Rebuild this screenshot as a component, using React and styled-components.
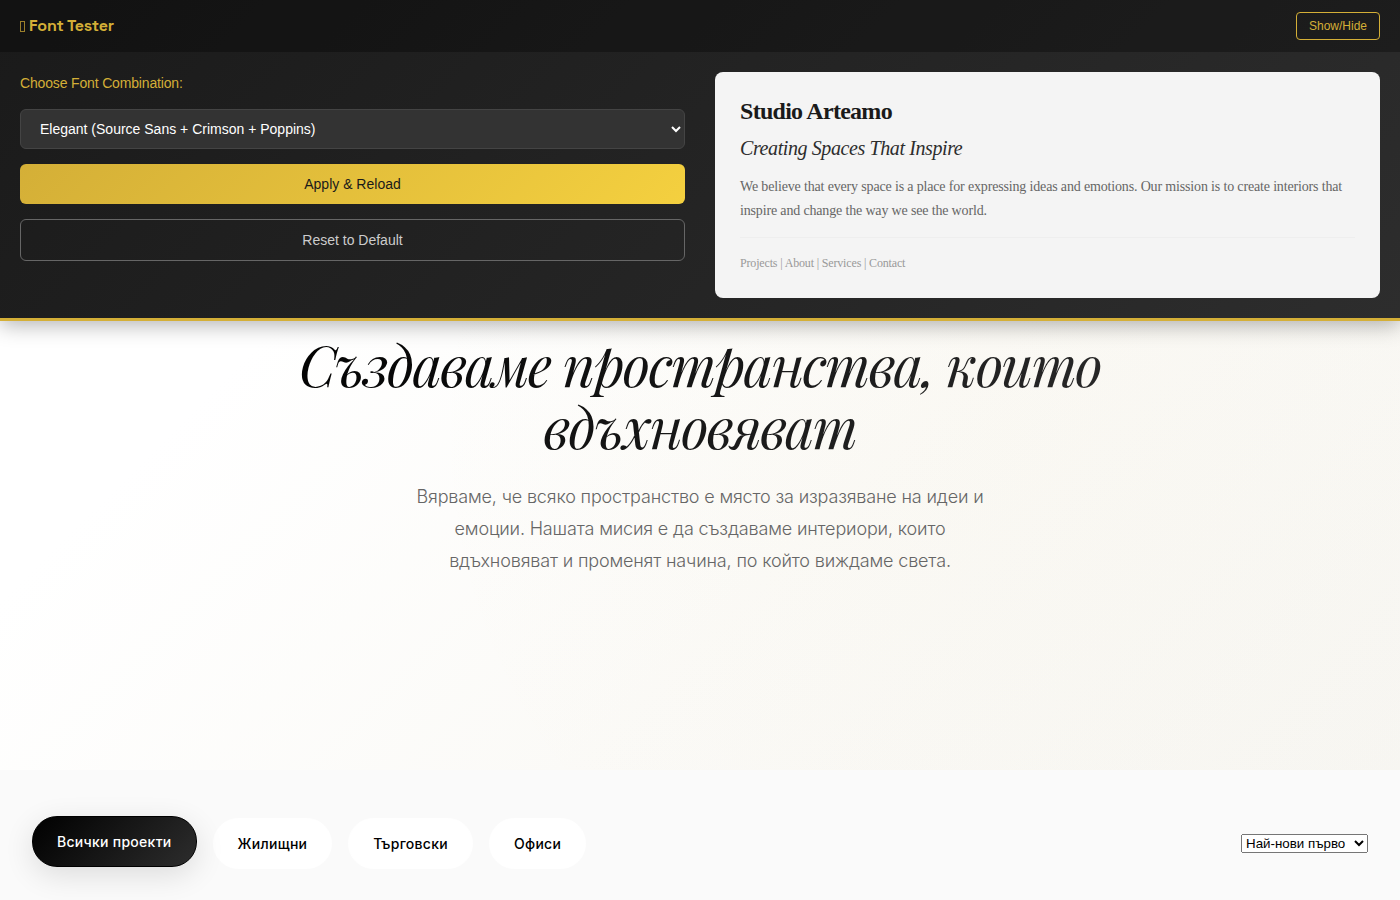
import React, { useState } from "react";
import styled, { createGlobalStyle, css } from "styled-components";

const GlobalStyle = createGlobalStyle`
  *, *::before, *::after { box-sizing: border-box; }
  body {
    margin: 0;
    background: #fafafa;
    color: #1a1a1a;
    font-family: Inter, "Liberation Sans", sans-serif;
    font-size: 16px;
    letter-spacing: -0.01em;
  }
  h1, h2, h3, p { margin: 0; }
`;

const sans = `"Liberation Sans", Arial, sans-serif`;
const serif = `"Liberation Serif", "Times New Roman", serif`;

const Panel = styled.aside`
  position: relative;
  z-index: 1;
  background: linear-gradient(135deg, #1a1a1a, #2d2d2d);
  border-bottom: 3px solid #d4af37;
  box-shadow: 0 4px 20px rgba(0, 0, 0, 0.3);
  font-family: ${sans};
`;

const PanelHeader = styled.header`
  display: flex;
  align-items: center;
  justify-content: space-between;
  padding: 12px 20px;
  background: rgba(0, 0, 0, 0.3);
`;

const PanelTitle = styled.h3`
  display: flex;
  align-items: center;
  gap: 4px;
  color: #d4af37;
  font: 600 16px/24px "Space Grotesk", Inter, sans-serif;
`;

const TitleMark = styled.span`
  width: 5px;
  height: 11px;
  border: 1px solid #9a7f2b;
`;

const ToggleButton = styled.button`
  height: 28px;
  padding: 0 12px;
  border: 1px solid #d4af37;
  border-radius: 4px;
  background: transparent;
  color: #d4af37;
  font: 12px ${sans};
  cursor: pointer;
`;

const PanelBody = styled.div`
  display: grid;
  grid-template-columns: 1fr 1fr;
  gap: 30px;
  padding: 20px;
`;

const Controls = styled.div`
  display: flex;
  flex-direction: column;
  gap: 15px;
`;

const Label = styled.label`
  color: #d4af37;
  font-size: 14px;
  line-height: 22px;
`;

const FontSelect = styled.select`
  height: 40px;
  padding: 0 15px;
  border: 1px solid #444;
  border-radius: 6px;
  background: #333;
  color: #fff;
  font: 14px ${sans};
`;

const ActionButton = styled.button`
  height: 40px;
  border: 0;
  border-radius: 6px;
  font: 14px ${sans};
  cursor: pointer;
  ${({ $outline }) =>
    $outline
      ? css`
          height: 42px;
          border: 1px solid #666;
          background: transparent;
          color: #ccc;
        `
      : css`
          background: linear-gradient(135deg, #d4af37, #f4d03f);
          color: #1a1a1a;
        `}
`;

const Preview = styled.section`
  padding: 25px;
  border-radius: 8px;
  background: #f4f4f4;
  font-family: ${serif};
`;

const PreviewTitle = styled.h2`
  margin-bottom: 8px;
  font-size: 24px;
  line-height: 29px;
  letter-spacing: -0.03em;
`;

const PreviewSubtitle = styled.p`
  margin-bottom: 13px;
  color: #2d2d2d;
  font-size: 20px;
  font-style: italic;
  line-height: 28px;
  letter-spacing: -0.02em;
`;

const PreviewText = styled.p`
  color: #666;
  font-size: 14px;
  line-height: 24px;
`;

const PreviewNav = styled.p`
  margin-top: 14px;
  padding-top: 15px;
  border-top: 1px solid #eee;
  color: #999;
  font-size: 12px;
  line-height: 20px;
`;

const Hero = styled.section`
  display: flex;
  flex-direction: column;
  align-items: center;
  gap: 24px;
  padding: 12px 32px 193px;
  background:
    radial-gradient(circle at 72% 25%, rgba(212, 175, 55, 0.02), transparent 620px),
    linear-gradient(135deg, #fff 15%, #fbfaf7 55%, #f7f6f2);
  text-align: center;
`;

const HeroTitle = styled.h1`
  max-width: 900px;
  background: linear-gradient(135deg, #000, #2d2d2d);
  background-clip: text;
  color: transparent;
  font: italic 400 56px/62px "Playfair Display", ${serif};
  letter-spacing: -0.03em;
`;

const HeroText = styled.p`
  max-width: 600px;
  color: #666;
  font-size: 18px;
  font-weight: 300;
  line-height: 32px;
`;

const FilterBar = styled.section`
  display: flex;
  align-items: center;
  justify-content: space-between;
  padding: 48px 32px 31px;
`;

const Filters = styled.div`
  display: flex;
  gap: 16px;
`;

const FilterButton = styled.button`
  height: 51px;
  padding: 0 24px;
  border: 1px solid ${({ $active }) => ($active ? "#000" : "#fff")};
  border-radius: 25px;
  background: ${({ $active }) => ($active ? "linear-gradient(135deg, #000, #2d2d2d)" : "#fff")};
  color: ${({ $active }) => ($active ? "#fff" : "#000")};
  box-shadow: ${({ $active }) => ($active ? "0 8px 30px rgba(0, 0, 0, 0.12)" : "none")};
  transform: ${({ $active }) => ($active ? "translateY(-2px)" : "none")};
  font: 500 14px Inter, sans-serif;
  letter-spacing: 0.02em;
  cursor: pointer;
`;

const SortSelect = styled.select`
  font-family: ${sans};
`;

const categories = ["Всички проекти", "Жилищни", "Търговски", "Офиси"];

export default function App() {
  const [open, setOpen] = useState(true);
  const [active, setActive] = useState(categories[0]);

  return (
    <>
      <GlobalStyle />
      <Panel>
        <PanelHeader>
          <PanelTitle>
            <TitleMark aria-hidden="true" />
            Font Tester
          </PanelTitle>
          <ToggleButton type="button" onClick={() => setOpen(!open)}>Show/Hide</ToggleButton>
        </PanelHeader>
        {open && (
          <PanelBody>
            <Controls>
              <Label htmlFor="fonts">Choose Font Combination:</Label>
              <FontSelect id="fonts">
                <option>Elegant (Source Sans + Crimson + Poppins)</option>
              </FontSelect>
              <ActionButton type="button">Apply &amp; Reload</ActionButton>
              <ActionButton type="button" $outline>Reset to Default</ActionButton>
            </Controls>
            <Preview>
              <PreviewTitle>Studio Arteamo</PreviewTitle>
              <PreviewSubtitle>Creating Spaces That Inspire</PreviewSubtitle>
              <PreviewText>
                We believe that every space is a place for expressing ideas and emotions. Our mission is to
                create interiors that inspire and change the way we see the world.
              </PreviewText>
              <PreviewNav>Projects | About | Services | Contact</PreviewNav>
            </Preview>
          </PanelBody>
        )}
      </Panel>
      <main>
        <Hero>
          <HeroTitle>Създаваме пространства, които вдъхновяват</HeroTitle>
          <HeroText>
            Вярваме, че всяко пространство е място за изразяване на идеи и емоции. Нашата мисия е да
            създаваме интериори, които вдъхновяват и променят начина, по който виждаме света.
          </HeroText>
        </Hero>
        <FilterBar>
          <Filters>
            {categories.map((name) => (
              <FilterButton
                key={name}
                type="button"
                $active={name === active}
                aria-pressed={name === active}
                onClick={() => setActive(name)}
              >
                {name}
              </FilterButton>
            ))}
          </Filters>
          <SortSelect aria-label="Подреждане">
            <option>Най-нови първо</option>
            <option>Най-стари първо</option>
          </SortSelect>
        </FilterBar>
      </main>
    </>
  );
}
